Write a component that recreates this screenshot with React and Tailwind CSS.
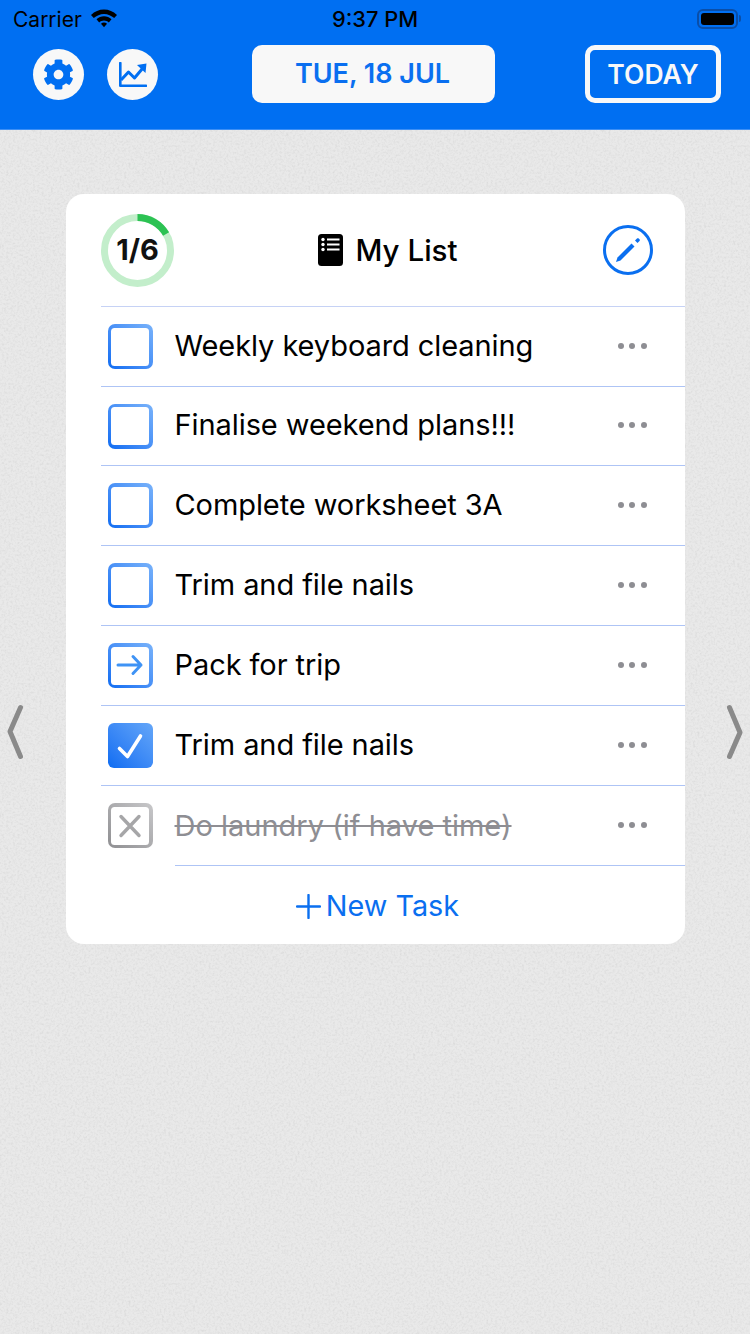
import { FaCog } from 'react-icons/fa';

const tasks = [
  { id: 1, name: 'Weekly keyboard cleaning', status: 'open' },
  { id: 2, name: 'Finalise weekend plans!!!', status: 'open' },
  { id: 3, name: 'Complete worksheet 3A', status: 'open' },
  { id: 4, name: 'Trim and file nails', status: 'open' },
  { id: 5, name: 'Pack for trip', status: 'moved' },
  { id: 6, name: 'Trim and file nails', status: 'done' },
  { id: 7, name: 'Do laundry (if have time)', status: 'cancelled' },
];

function Checkbox({ status }) {
  if (status === 'done') {
    return (
      <div className="w-[45px] h-[45px] shrink-0 rounded-[6px] bg-linear-to-tr from-[#0a6cf2] to-[#64a6f8] flex items-center justify-center">
        <svg width="30" height="30" viewBox="0 0 30 30" fill="none">
          <path d="M4.500 17.500 L12.500 25.500 L25.500 5" stroke="white" strokeWidth="3.600" strokeLinecap="round" strokeLinejoin="round" />
        </svg>
      </div>
    );
  }
  const gradient =
    status === 'cancelled'
      ? 'bg-linear-to-tr from-[#8f8f92] to-[#c8c8ca]'
      : 'bg-linear-to-tr from-[#0a6cf2] to-[#78b2fa]';
  return (
    <div className={`w-[45px] h-[45px] shrink-0 rounded-[7px] p-[3.500px] ${gradient}`}>
      <div className="w-full h-full rounded-[3.500px] bg-white flex items-center justify-center">
        {status === 'moved' && (
          <svg width="28" height="24" viewBox="0 0 28 24" fill="none" className="-mt-[2px]">
            <path d="M2 12 H25 M17 3.500 L25 12 L17 20.500" stroke="#3f93f5" strokeWidth="3" strokeLinecap="round" strokeLinejoin="round" />
          </svg>
        )}
        {status === 'cancelled' && (
          <svg width="24" height="24" viewBox="0 0 24 24" fill="none">
            <path d="M3 2.500 L21 21.500 M21 2.500 L3 21.500" stroke="#a6a6a8" strokeWidth="3.400" strokeLinecap="round" />
          </svg>
        )}
      </div>
    </div>
  );
}

function TaskRow({ task, short, last }) {
  const cancelled = task.status === 'cancelled';
  return (
    <div>
      <div className={`flex items-center pl-[7px] pr-[38px] ${short ? 'h-[78px]' : 'h-[79px]'}`}>
        <Checkbox status={task.status} />
        <span className={`ml-[22px] flex-1 text-[29px] leading-none ${cancelled ? 'text-[#8e8e93] line-through' : 'mb-[3px] tracking-[-0.080px] text-black'}`}>
          {task.name}
        </span>
        <div className="flex gap-[5.400px] mb-[2px]">
          <span className="w-[6px] h-[6px] rounded-full bg-[#8e8e93]" />
          <span className="w-[6px] h-[6px] rounded-full bg-[#8e8e93]" />
          <span className="w-[6px] h-[6px] rounded-full bg-[#8e8e93]" />
        </div>
      </div>
      <div className={`h-px bg-[#aec4f5] ${last ? 'ml-[74px]' : ''}`} />
    </div>
  );
}

function Chevron({ flip }) {
  return (
    <svg width="18" height="56" viewBox="0 0 18 56" fill="none" className={`relative ${flip ? 'rotate-180' : ''}`}>
      <path d="M14.500 3.500 L4 27.500 L14.500 52.500" stroke="#8a8a8a" strokeWidth="5" strokeLinecap="round" strokeLinejoin="round" />
    </svg>
  );
}

export default function App() {
  return (
    <div className="w-[750px] h-[1334px] flex flex-col bg-[#e9e9e9] font-['Inter','Liberation_Sans',sans-serif] overflow-hidden">
      <header className="h-[130px] shrink-0 bg-[#006ff2] border-b border-[#3d8ff5]">
        <div className="h-[38px] relative flex items-center justify-between pl-[13px] pr-[9px] text-black text-[21px]">
          <div className="flex items-center gap-[9px]">
            <span className="mt-[2px]">Carrier</span>
            <svg width="26" height="19" viewBox="1 2 26 18" fill="black" className="-mt-[2px]">
              <path d="M14 2 C9 2 4.800 4 1 7.400 L3.800 10.600 C6.600 8.200 10 6.500 14 6.500 C18 6.500 21.400 8.200 24.200 10.600 L27 7.400 C23.200 4 19 2 14 2 Z" />
              <path d="M14 8.800 C11.200 8.800 8.500 9.900 6.500 11.800 L9.200 14.900 C10.500 13.800 12.200 13.100 14 13.100 C15.800 13.100 17.500 13.800 18.800 14.900 L21.500 11.800 C19.500 9.900 16.800 8.800 14 8.800 Z" />
              <path d="M14 15.100 C12.900 15.100 11.800 15.500 11 16.200 L14 19.800 L17 16.200 C16.200 15.500 15.100 15.100 14 15.100 Z" />
            </svg>
          </div>
          <span className="absolute inset-x-0 text-center font-medium text-[21.800px]">9:37 PM</span>
          <div className="flex items-center gap-[1px] -mt-[1px]">
            <div className="w-[41px] h-[20px] rounded-[6px] border-2 border-[#0a4ea8] p-[2px]">
              <div className="w-full h-full rounded-[3px] bg-black" />
            </div>
            <div className="w-[2px] h-[7px] rounded-r-full bg-[#0a4ea8]" />
          </div>
        </div>
        <div className="flex items-center pl-[33px] pt-[7px]">
          <div className="w-[51px] h-[51px] rounded-full bg-[#f8f8f8] flex items-center justify-center text-[#006ff2]">
            <FaCog size={31} />
          </div>
          <div className="ml-[23px] w-[51px] h-[51px] rounded-full bg-[#f8f8f8] flex items-center justify-center">
            <svg width="28" height="25" viewBox="0 0 28 25" fill="none">
              <path d="M1.300 1 V23.700 H27" stroke="#006ff2" strokeWidth="2.600" strokeLinecap="round" strokeLinejoin="round" />
              <path d="M2 18 L9.500 10 L15.500 16 L23.500 6.500" stroke="#006ff2" strokeWidth="3" strokeLinejoin="round" />
              <path d="M18 3 L27.500 1.500 L26.500 11 Z" fill="#006ff2" />
            </svg>
          </div>
          <div className="ml-[94px] w-[243px] h-[58px] pt-[1px] pr-[2px] rounded-[10px] bg-[#f8f8f8] flex items-center justify-center text-[#0a6ff0] text-[27px] font-semibold">
            TUE, 18 JUL
          </div>
          <div className="ml-[90px] w-[136px] h-[58px] pt-[1px] rounded-[10px] border-[5px] border-[#f8f8f8] flex items-center justify-center text-[#f8f8f8] text-[26.500px] font-semibold">
            TODAY
          </div>
        </div>
      </header>

      <main className="relative flex-1 flex items-center justify-between px-[6px]">
        <svg className="absolute inset-0 w-full h-full" aria-hidden="true">
          <filter id="paper">
            <feTurbulence type="fractalNoise" baseFrequency="0.45" numOctaves="3" seed="4" />
            <feColorMatrix values="0 0 0 0 0.55  0 0 0 0 0.55  0 0 0 0 0.55  0.5 0.5 0 0 -0.44" />
          </filter>
          <rect width="100%" height="100%" filter="url(#paper)" />
        </svg>
        <Chevron />
        <section className="relative self-start mt-[64px] w-[619px] h-[750px] rounded-[18px] bg-white pl-[35px]">
          <div className="h-[112px] flex items-center pr-[32px]">
            <svg width="73" height="73" viewBox="0 0 73 73" fill="none" className="shrink-0">
              <circle cx="36.500" cy="36.500" r="33" stroke="#c3eecb" strokeWidth="7" />
              <path d="M36.500 3.500 A33 33 0 0 1 65.080 20" stroke="#2cc253" strokeWidth="7" />
              <text x="36.500" y="46" textAnchor="middle" fontSize="29" fontWeight="700" fill="#111">1/6</text>
            </svg>
            <div className="flex-1 flex items-center justify-center gap-[13px] pr-[1px]">
              <svg width="25" height="32" viewBox="0 0 25 32" fill="none">
                <rect width="25" height="32" rx="3.500" fill="black" />
                <g fill="white">
                  <circle cx="5" cy="5.500" r="1.700" />
                  <circle cx="5" cy="10.500" r="1.700" />
                  <circle cx="5" cy="15.500" r="1.700" />
                  <rect x="9" y="4.500" width="12.500" height="2" />
                  <rect x="9" y="9.500" width="12.500" height="2" />
                  <rect x="9" y="14.500" width="12.500" height="2" />
                </g>
              </svg>
              <span className="pt-[2px] text-[29.500px] font-medium text-black leading-none">My List</span>
            </div>
            <div className="w-[50px] h-[50px] rounded-full border-[3px] border-[#0a6ff0] flex items-center justify-center shrink-0">
              <svg width="28" height="28" viewBox="0 0 28 28" fill="none">
                <path d="M2 26 L3.500 21.500 L17.500 7.500 L20.500 10.500 L6.500 24.500 Z" fill="#0a6ff0" />
                <path d="M21 4.500 L23 2.500 C23.500 2 24.200 2 24.700 2.500 L25.500 3.300 C26 3.800 26 4.500 25.500 5 L23.500 7 Z" fill="#0a6ff0" />
              </svg>
            </div>
          </div>
          <div className="h-px bg-[#c6d2f5]" />
          {tasks.map((task, i) => (
            <TaskRow key={task.id} task={task} short={i === 1} last={i === tasks.length - 1} />
          ))}
          <div className="flex items-center justify-center pt-[18px] pr-[30px] text-[#0a6ff0] text-[28.800px] leading-[44px]">
            <svg width="25" height="25" viewBox="0 0 25 25" fill="none" className="mr-[5px]">
              <path d="M12.500 1 V24 M1 12.500 H24" stroke="#0a6ff0" strokeWidth="2.400" strokeLinecap="round" />
            </svg>
            New Task
          </div>
        </section>
        <Chevron flip />
      </main>
    </div>
  );
}
